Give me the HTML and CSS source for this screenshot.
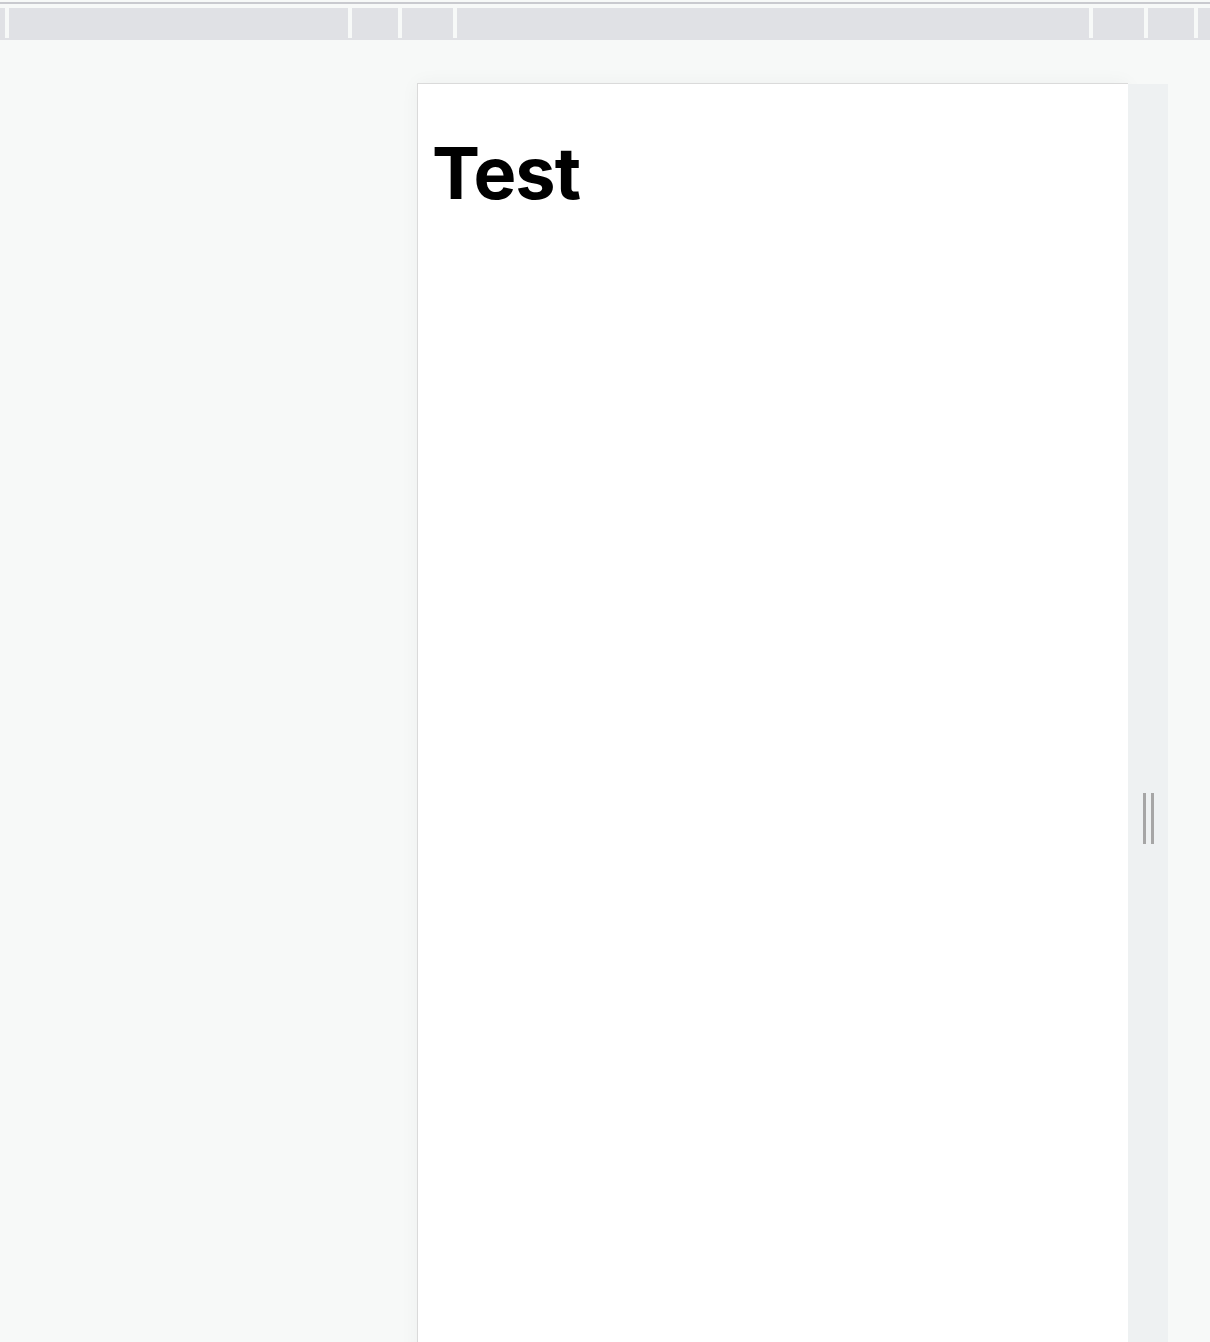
FILE: index.html
```html
<!DOCTYPE html>
<html>
<head>
<meta charset="utf-8">
<link rel="stylesheet" href="styles.css">
</head>
<body>
<div class="topline"></div>
<div class="toolbar">
  <div class="cell c0"></div><div class="sep"></div>
  <div class="cell c1"></div><div class="sep"></div>
  <div class="cell c2"></div><div class="sep"></div>
  <div class="cell c3"></div><div class="sep"></div>
  <div class="cell c4"></div><div class="sep"></div>
  <div class="cell c5"></div><div class="sep"></div>
  <div class="cell c6"></div><div class="sep"></div>
  <div class="cell c7"></div>
</div>
<div class="workspace">
  <div class="page">
    <h1 class="title">Test</h1>
  </div>
  <div class="gutter">
    <div class="handle"><span></span><span></span></div>
  </div>
</div>
</body>
</html>
```
FILE: styles.css
```css
html, body {
  margin: 0;
  padding: 0;
  height: 1342px;
  overflow: hidden;
  background: #f7f9f8;
  font-family: Inter, "Liberation Sans", Arial, sans-serif;
}
.topline {
  height: 2px;
  margin-top: 2px;
  background: #c9cacf;
}
.toolbar {
  margin-top: 4px;
  height: 32px;
  display: flex;
  align-items: flex-start;
  background: #e0e1e5;
}
.sep {
  width: 4px;
  height: 30px;
  background: #f7f9f8;
  flex: none;
}
.cell { height: 32px; flex: none; }
.c0 { width: 5px; }
.c1 { width: 339px; }
.c2 { width: 46px; }
.c3 { width: 51px; }
.c4 { width: 632px; }
.c5 { width: 51px; }
.c6 { width: 46px; }
.c7 { flex: 1; }
.workspace {
  display: flex;
  padding-top: 43px;
  padding-left: 417px;
}
.page {
  width: 710px;
  height: 1300px;
  background: #fff;
  border-left: 1px solid #dadada;
  border-top: 1px solid #dadada;
  box-shadow: 0 0 18px rgba(0, 0, 0, 0.045);
  box-sizing: content-box;
}
.title {
  margin: 44px 0 0 14px;
  font-size: 72px;
  line-height: 90px;
  font-weight: 700;
  color: #000;
  letter-spacing: -1px;
}
.gutter {
  width: 40px;
  height: 1300px;
  margin-top: 1px;
  background: #eef1f2;
  display: flex;
  justify-content: center;
  padding-top: 709px;
  box-sizing: border-box;
}
.handle {
  display: flex;
  gap: 5px;
  height: 51px;
}
.handle span {
  width: 3px;
  height: 51px;
  background: #a6a6a6;
}
```
